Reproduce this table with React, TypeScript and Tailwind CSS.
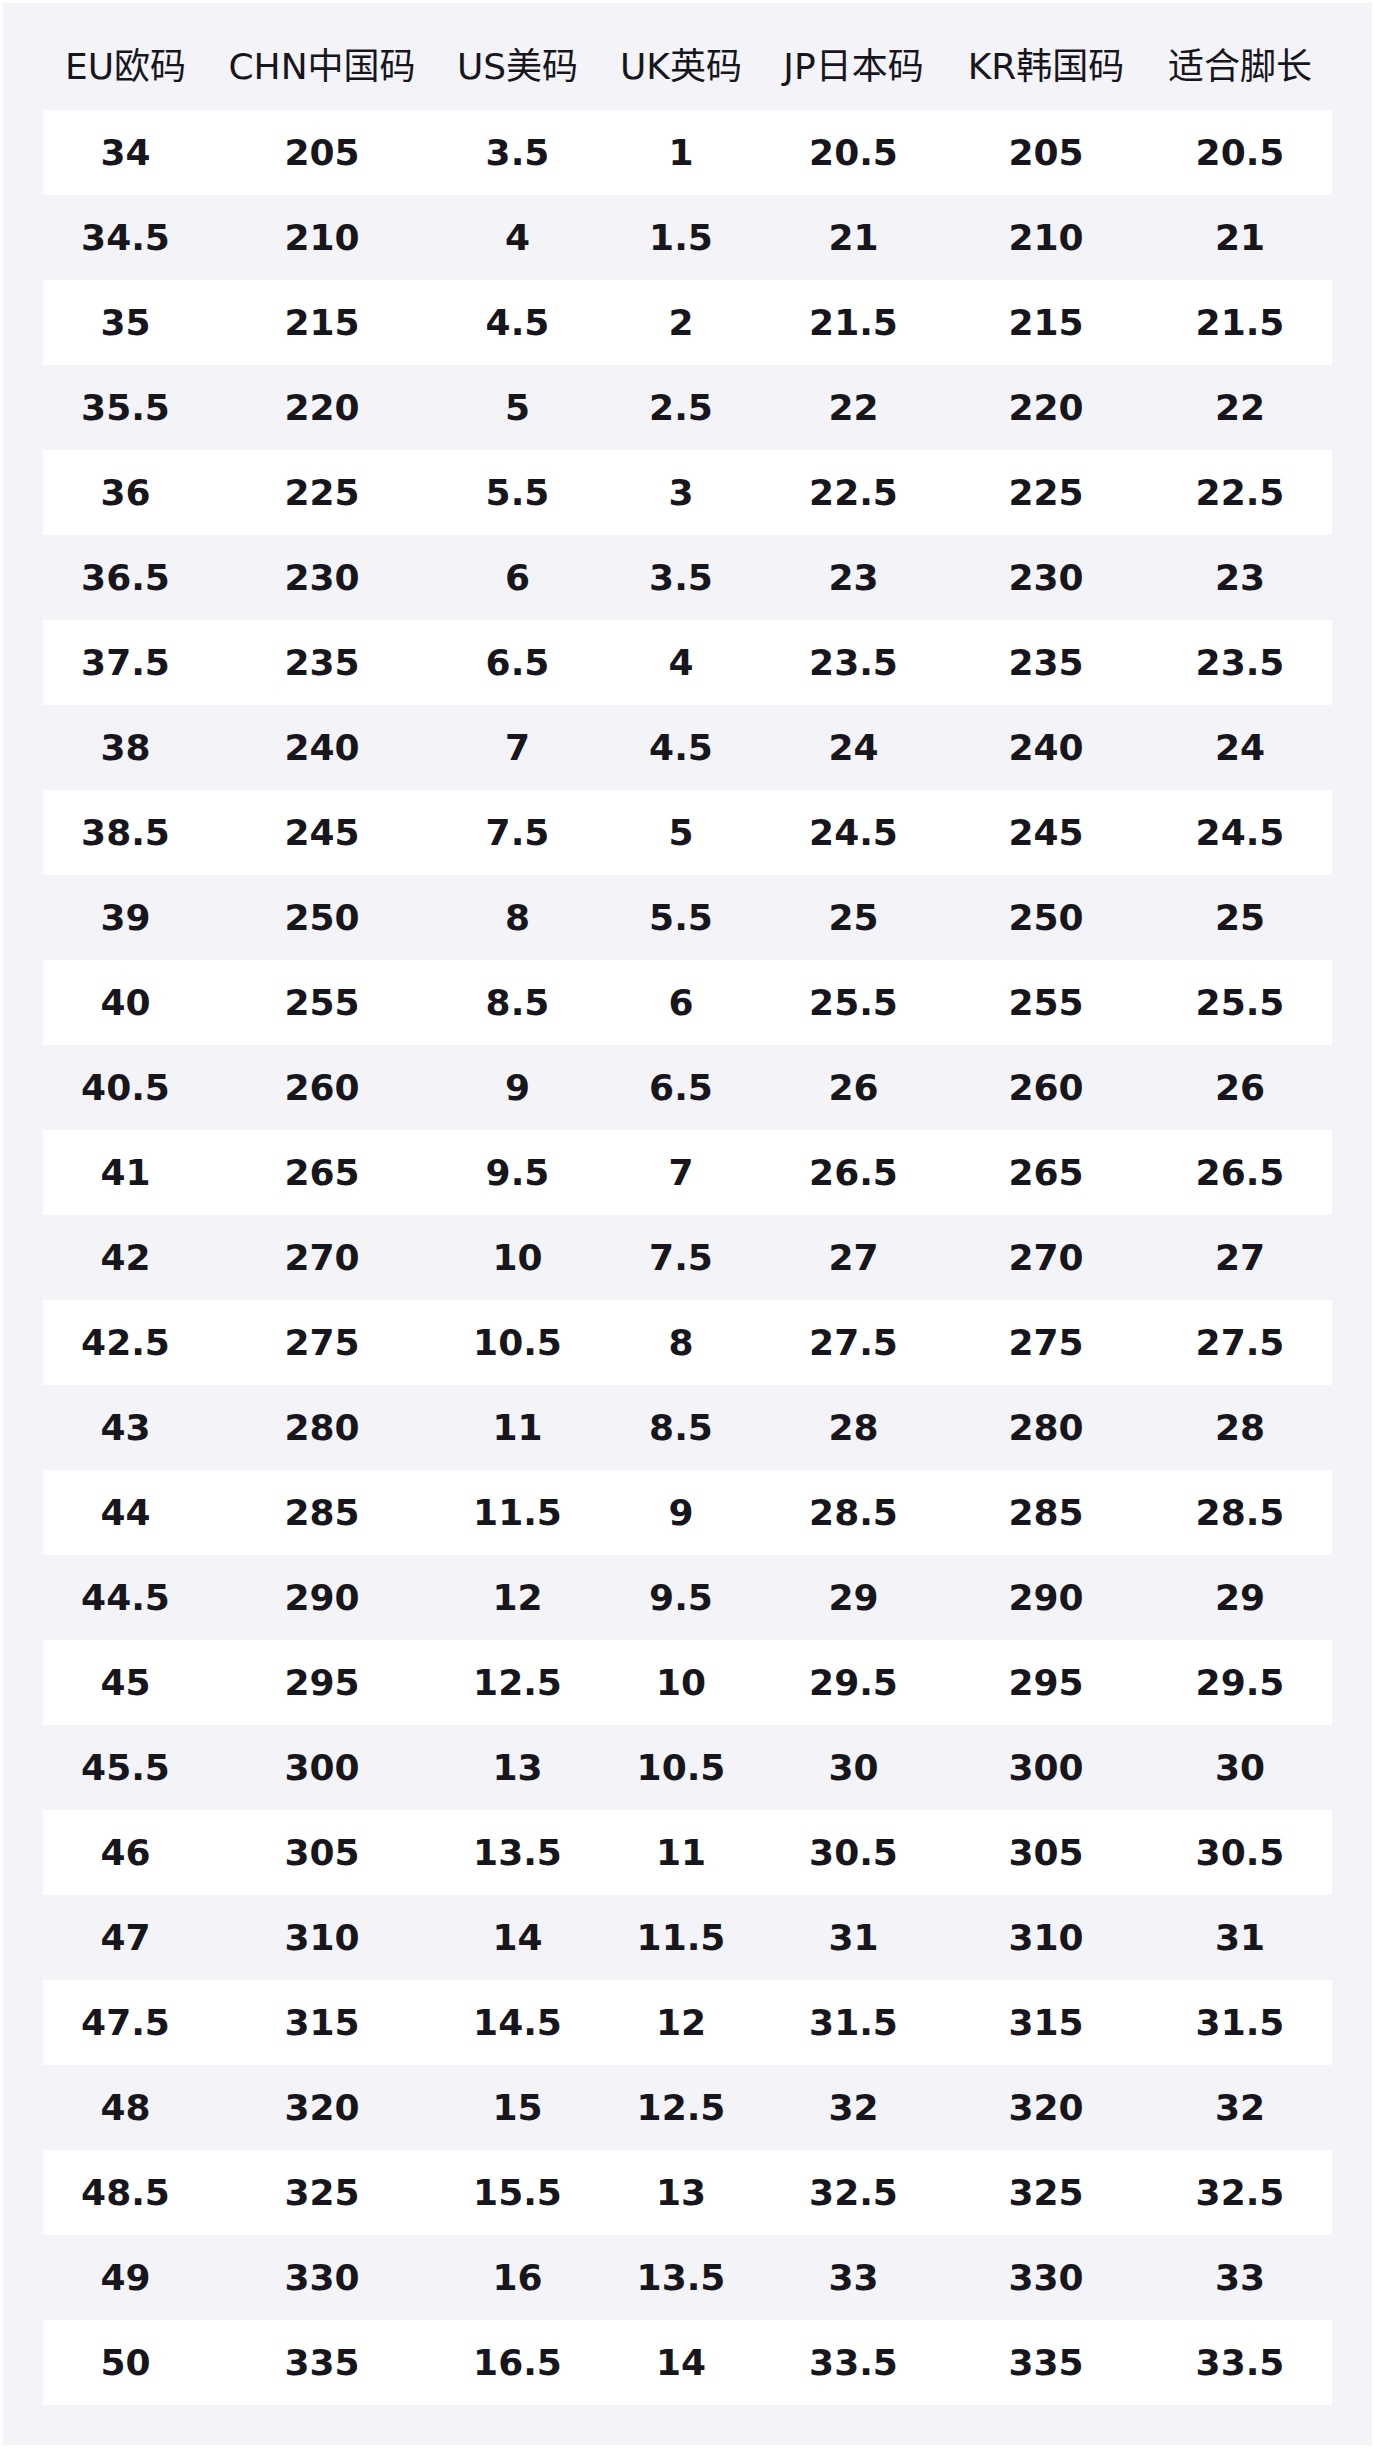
const headers = ["EU欧码", "CHN中国码", "US美码", "UK英码", "JP日本码", "KR韩国码", "适合脚长"];

const rows: string[][] = [
  ["34", "205", "3.5", "1", "20.5", "205", "20.5"],
  ["34.5", "210", "4", "1.5", "21", "210", "21"],
  ["35", "215", "4.5", "2", "21.5", "215", "21.5"],
  ["35.5", "220", "5", "2.5", "22", "220", "22"],
  ["36", "225", "5.5", "3", "22.5", "225", "22.5"],
  ["36.5", "230", "6", "3.5", "23", "230", "23"],
  ["37.5", "235", "6.5", "4", "23.5", "235", "23.5"],
  ["38", "240", "7", "4.5", "24", "240", "24"],
  ["38.5", "245", "7.5", "5", "24.5", "245", "24.5"],
  ["39", "250", "8", "5.5", "25", "250", "25"],
  ["40", "255", "8.5", "6", "25.5", "255", "25.5"],
  ["40.5", "260", "9", "6.5", "26", "260", "26"],
  ["41", "265", "9.5", "7", "26.5", "265", "26.5"],
  ["42", "270", "10", "7.5", "27", "270", "27"],
  ["42.5", "275", "10.5", "8", "27.5", "275", "27.5"],
  ["43", "280", "11", "8.5", "28", "280", "28"],
  ["44", "285", "11.5", "9", "28.5", "285", "28.5"],
  ["44.5", "290", "12", "9.5", "29", "290", "29"],
  ["45", "295", "12.5", "10", "29.5", "295", "29.5"],
  ["45.5", "300", "13", "10.5", "30", "300", "30"],
  ["46", "305", "13.5", "11", "30.5", "305", "30.5"],
  ["47", "310", "14", "11.5", "31", "310", "31"],
  ["47.5", "315", "14.5", "12", "31.5", "315", "31.5"],
  ["48", "320", "15", "12.5", "32", "320", "32"],
  ["48.5", "325", "15.5", "13", "32.5", "325", "32.5"],
  ["49", "330", "16", "13.5", "33", "330", "33"],
  ["50", "335", "16.5", "14", "33.5", "335", "33.5"],
];

const cols = "grid grid-cols-[165px_228px_163px_164px_181px_204px_1fr]";

export default function App() {
  return (
    <div className="bg-white p-[3px] font-['DejaVu_Sans','Noto_Sans_CJK_SC',sans-serif] text-[#16161c]">
      <div className="bg-[#f3f3f8] px-[40px] pb-[40px]">
        <div className={`${cols} h-[107px] pt-[21px] items-center`}>
          {headers.map((h) => (
            <div key={h} className="text-center text-[36px] leading-none whitespace-nowrap">
              {h}
            </div>
          ))}
        </div>
        {rows.map((r, i) => (
          <div key={i} className={`${cols} h-[85px] items-center ${i % 2 === 0 ? "bg-white" : ""}`}>
            {r.map((v, j) => (
              <div key={j} className="text-center text-[36px] font-bold">
                {v}
              </div>
            ))}
          </div>
        ))}
      </div>
    </div>
  );
}
